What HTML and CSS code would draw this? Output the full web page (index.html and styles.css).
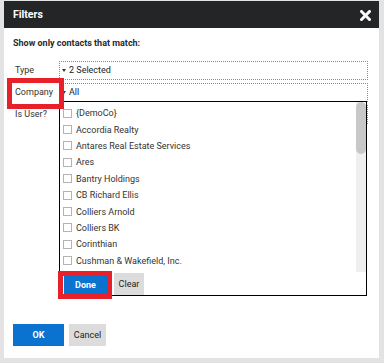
FILE: index.html
```html
<!DOCTYPE html>
<html>
<head>
<meta charset="utf-8">
<link rel="stylesheet" href="styles.css">
</head>
<body>
<div class="dialog">
  <div class="header">
    <span class="title">Filters</span>
    <svg class="close" width="11" height="11" viewBox="0 0 11 11"><path d="M1.5 1.5 L9.5 9.5 M9.5 1.5 L1.5 9.5" stroke="#fff" stroke-width="3" stroke-linecap="square"/></svg>
  </div>
  <div class="content">
    <div class="intro">Show only contacts that match:</div>
    <div class="row">
      <div class="label">Type</div>
      <div class="select"><span class="caret"></span>2 Selected</div>
    </div>
    <div class="row">
      <div class="label">Company</div>
      <div class="select-wrap">
        <div class="select"><span class="caret"></span>All</div>
        <div class="menu">
          <div class="scroll-area">
            <div class="options">
              <label class="opt"><span class="box"></span>{DemoCo}</label>
              <label class="opt"><span class="box"></span>Accordia Realty</label>
              <label class="opt"><span class="box"></span>Antares Real Estate Services</label>
              <label class="opt"><span class="box"></span>Ares</label>
              <label class="opt"><span class="box"></span>Bantry Holdings</label>
              <label class="opt"><span class="box"></span>CB Richard Ellis</label>
              <label class="opt"><span class="box"></span>Colliers Arnold</label>
              <label class="opt"><span class="box"></span>Colliers BK</label>
              <label class="opt"><span class="box"></span>Corinthian</label>
              <label class="opt"><span class="box"></span>Cushman &amp; Wakefield, Inc.</label>
            </div>
            <div class="track"><div class="thumb"></div></div>
          </div>
          <div class="menu-foot">
            <button class="btn primary done">Done</button>
            <button class="btn clear">Clear</button>
          </div>
        </div>
      </div>
    </div>
    <div class="row">
      <div class="label">Is User?</div>
      <div class="select"></div>
    </div>
  </div>
  <div class="footer">
    <button class="btn primary ok">OK</button>
    <button class="btn cancel">Cancel</button>
  </div>
  <div class="mark mark-company"></div>
  <div class="mark mark-done"></div>
</div>
</body>
</html>
```

FILE: styles.css
```css
* { box-sizing: border-box; }
html, body { margin: 0; padding: 0; }
body {
  background: #e3e3e3;
  font-family: Roboto, "Liberation Sans", sans-serif;
  font-size: 9px;
  color: #333;
  width: 384px;
  height: 363px;
  overflow: hidden;
}
.dialog {
  position: relative;
  margin: 1px 0 0 4px;
  width: 375px;
  height: 357px;
  background: #fff;
}
.header {
  height: 27px;
  background: #232527;
  display: flex;
  align-items: center;
  justify-content: space-between;
  padding: 0 8px 0 9px;
}
.title {
  color: #fff;
  font-weight: bold;
  font-size: 10.5px;
}
.close { display: block; margin-top: 1px; }
.content {
  padding: 8px 11px 0 9px;
}
.intro {
  font-weight: bold;
  font-size: 9px;
  line-height: 14px;
  margin-bottom: 11px;
  color: #2b2b2b;
}
.row {
  display: flex;
  align-items: flex-start;
  margin-bottom: 3px;
  height: 19px;
}
.label {
  width: 46px;
  padding-left: 2px;
  line-height: 19px;
}
.select-wrap {
  position: relative;
  flex: 1;
}
.select {
  flex: 1;
  height: 19px;
  border: 1px dotted #8a8a8a;
  line-height: 17px;
  padding-left: 9px;
  position: relative;
  color: #222;
}
.caret {
  position: absolute;
  left: 2px;
  top: 7px;
  width: 0;
  height: 0;
  border-left: 2.5px solid transparent;
  border-right: 2.5px solid transparent;
  border-top: 3px solid #333;
}
.menu {
  position: absolute;
  left: 0;
  top: 18px;
  width: 308px;
  height: 195px;
  background: #fff;
  border: 1px solid #000;
  z-index: 2;
  display: flex;
  flex-direction: column;
}
.scroll-area {
  height: 170px;
  display: flex;
  overflow: hidden;
}
.options {
  flex: 1;
  padding-top: 3px;
}
.track {
  width: 10px;
  background: #efefef;
}
.thumb {
  height: 52px;
  background: #c8c8c8;
  border-radius: 5px;
}
.opt {
  display: flex;
  align-items: center;
  height: 16.4px;
  padding-left: 3px;
  color: #333;
  white-space: nowrap;
}
.box {
  width: 9px;
  height: 9px;
  border: 1px solid #b3b3b3;
  margin-right: 4px;
  background: #fff;
  flex: none;
}
.menu-foot {
  flex: 1;
  display: flex;
  align-items: flex-end;
  gap: 7px;
  padding-left: 4px;
}
.btn {
  font-family: Roboto, "Liberation Sans", sans-serif;
  font-size: 9px;
  border: none;
  padding: 0;
  margin: 0;
  cursor: pointer;
}
.primary {
  background: #0a72cf;
  color: #fff;
  font-weight: bold;
}
.done {
  width: 43px;
  height: 19px;
  margin-bottom: 1px;
}
.clear {
  width: 30px;
  height: 22px;
  background: #dcdcdc;
  color: #222;
}
.footer {
  display: flex;
  gap: 5px;
  padding-left: 9px;
  margin-top: 200px;
}
.ok { width: 51px; height: 22px; }
.cancel { width: 37px; height: 22px; background: #dcdcdc; color: #222; }
.mark {
  position: absolute;
  border: 5px solid #e8202a;
  z-index: 5;
}
.mark-company {
  left: 3px;
  top: 77px;
  width: 57px;
  height: 31px;
}
.mark-done {
  left: 54px;
  top: 270px;
  width: 54px;
  height: 28px;
}
```
